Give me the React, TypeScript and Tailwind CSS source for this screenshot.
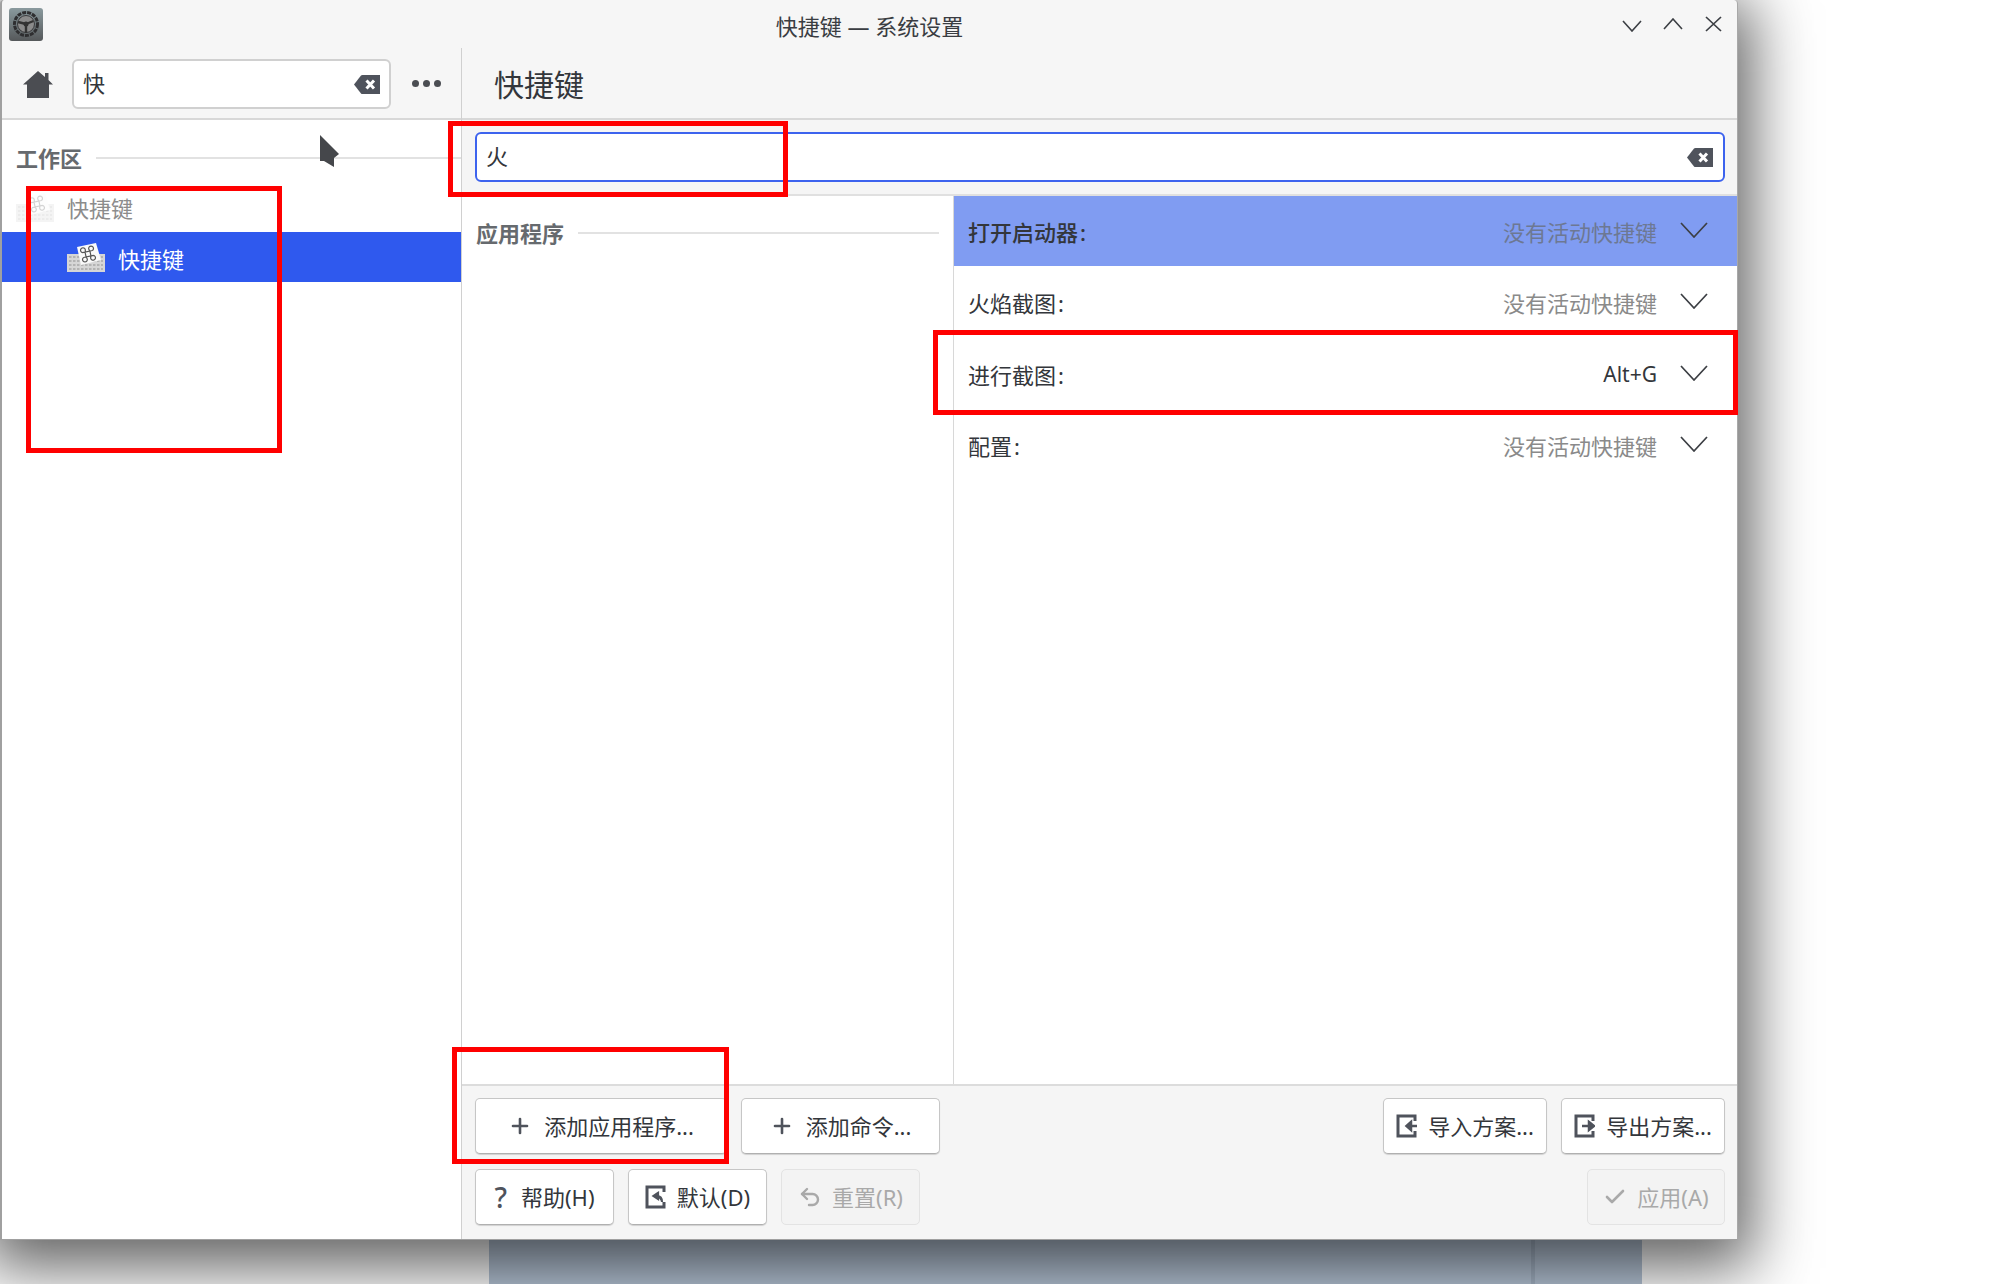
import { Check, Plus, Undo2 } from 'lucide-react'
import type { ReactNode } from 'react'

const fontClass = "font-['Noto_Sans','Noto_Sans_CJK_SC',sans-serif]"

function ClearIcon() {
  return (
    <svg width="28" height="21" viewBox="0 0 28 21">
      <path d="M8 1.5 Q8.5 1 9.5 1 H27 V20 H9.5 Q8.5 20 8 19.5 L1 10.5 Z" fill="#4f535c" />
      <path d="M13.5 6.5 L21 14.5 M21 6.5 L13.5 14.5" stroke="#fff" strokeWidth="3" />
    </svg>
  )
}

function HomeIcon() {
  return (
    <svg width="30" height="28" viewBox="0 0 30 28">
      <path d="M15 1 L22 7 V3 H25.5 V10 L30 14.5 H26 V28 H4 V14.5 H0 Z" fill="#4b4d52" />
    </svg>
  )
}

function GearTile() {
  return (
    <svg width="34" height="33" viewBox="0 0 34 33">
      <defs>
        <linearGradient id="tile" x1="0" y1="0" x2="0" y2="1">
          <stop offset="0" stopColor="#8a9a9e" />
          <stop offset="1" stopColor="#55585a" />
        </linearGradient>
      </defs>
      <rect width="34" height="33" rx="3" fill="url(#tile)" />
      <circle cx="17" cy="16" r="11.5" fill="none" stroke="#2e2e30" strokeWidth="3" strokeDasharray="4 1" />
      <circle cx="17" cy="16" r="8.5" fill="#8b8b8b" stroke="#3a3a3c" strokeWidth="1" />
      <circle cx="17" cy="16" r="2.5" fill="#333" />
      <path d="M17 16 L9 14 M17 16 L24.5 13 M17 16 L17 25" stroke="#333" strokeWidth="2.4" />
    </svg>
  )
}

function KeyboardIcon({ faded }: { faded?: boolean }) {
  return (
    <svg width="38" height="29" viewBox="0 0 38 29" className={faded ? 'opacity-25' : ''}>
      <rect x="0" y="11" width="38" height="18" fill="#d6d6d6" />
      <path
        d="M2 14h34M2 18h34M2 22h34M2 26h34"
        stroke="#a8a8a8"
        strokeWidth="1.4"
        strokeDasharray="2.5 1.5"
      />
      <path d="M10 4 L29 0 L34 17 L14 22 Z" fill="#fafafa" />
      <g transform="rotate(-12 21 11)">
        <path
          d="M18.5 8 V14 M23.5 8 V14 M16 8.5 H26 M16 13.5 H26 M18.5 8 a2.4 2.4 0 1 0 -2.5 0.5 M23.5 8 a2.4 2.4 0 1 1 2.5 0.5 M18.5 14 a2.4 2.4 0 1 1 -2.5 -0.5 M23.5 14 a2.4 2.4 0 1 0 2.5 -0.5"
          fill="none"
          stroke="#555"
          strokeWidth="1.2"
        />
      </g>
    </svg>
  )
}

function SchemeIcon({ kind }: { kind: 'import' | 'export' | 'default' }) {
  return (
    <svg width="21" height="24" viewBox="0 0 21 24">
      <path d="M19 7 V2 H2 V22 H19 V17" fill="none" stroke="#4f535c" strokeWidth="3" />
      {kind === 'import' && <path d="M21 12 H13 M15 8 L10.5 12 L15 16 Z" stroke="#4f535c" strokeWidth="2.5" fill="#4f535c" />}
      {kind === 'export' && <path d="M8 12 H15 M15 8 L20 12 L15 16 Z" stroke="#4f535c" strokeWidth="2.5" fill="#4f535c" />}
      {kind === 'default' && <path d="M17 17 Q17 11 12 11 M13 8 L8.5 11 L13 14 Z" stroke="#4f535c" strokeWidth="2.2" fill="#4f535c" />}
    </svg>
  )
}

function Chevron({ up, size = 20, width = 1.6 }: { up?: boolean; size?: number; width?: number }) {
  const h = size / 2
  return (
    <svg width={size} height={h + 2} viewBox={`0 0 ${size} ${h + 2}`}>
      <polyline
        points={up ? `1,${h + 1} ${h},1 ${size - 1},${h + 1}` : `1,1 ${h},${h + 1} ${size - 1},1`}
        fill="none"
        stroke="#3c3f44"
        strokeWidth={width}
      />
    </svg>
  )
}

function ActionButton({
  width,
  disabled,
  icon,
  gap,
  children,
}: {
  width: string
  disabled?: boolean
  icon: ReactNode
  gap: string
  children: ReactNode
}) {
  return (
    <div
      className={`flex h-[56px] items-center justify-center rounded-[5px] border text-[22px] ${width} ${gap} ${
        disabled
          ? 'border-[#e3e3e3] bg-[#f3f3f3] text-[#a9a9a9]'
          : 'border-[#c6c6c6] border-b-[#b0b0b0] bg-white text-[#33363b] shadow-[0_1px_1px_rgba(0,0,0,0.15)]'
      }`}
    >
      {icon}
      <span className="leading-none">{children}</span>
    </div>
  )
}

function SectionTitle({ label }: { label: string }) {
  return (
    <div className="flex items-center gap-[14px]">
      <span className="text-[22px] font-bold leading-none text-[#666a6e]">{label}</span>
      <div className="h-[2px] flex-1 bg-[#e2e2e2]" />
    </div>
  )
}

const shortcuts = [
  { name: '打开启动器', keys: '没有活动快捷键', active: true },
  { name: '火焰截图', keys: '没有活动快捷键' },
  { name: '进行截图', keys: 'Alt+G', bound: true },
  { name: '配置', keys: '没有活动快捷键' },
]

export default function App() {
  return (
    <div className={`relative h-[1284px] w-[2000px] overflow-hidden bg-white ${fontClass}`}>
      {/* Fenster */}
      <div className="relative z-10 flex h-[1240px] w-[1738px] flex-col rounded-t-[4px] border-r border-b border-l-2 border-r-[#a8a8a8] border-b-[#a0a0a0] border-l-[#a0a0a0] bg-[#f6f6f6] shadow-[0_14px_62px_14px_rgba(0,0,0,0.62)]">
        <div className="relative flex h-[48px] shrink-0 items-center">
          <div className="absolute left-[7px] top-[8px]">
            <GearTile />
          </div>
          <div className="w-full pt-[3px] text-center text-[22px] leading-none text-[#3a3d42]">快捷键 — 系统设置</div>
          <div className="absolute left-[1620px] top-[16px] flex items-center gap-[21px]">
            <div className="pt-[3px]">
              <Chevron />
            </div>
            <div>
              <Chevron up />
            </div>
            <svg width="17" height="16" viewBox="0 0 17 16" className="ml-[1px]">
              <path d="M1 1 L16 15 M16 1 L1 15" stroke="#3c3f44" strokeWidth="1.7" />
            </svg>
          </div>
        </div>

        <div className="flex min-h-0 flex-1">
          {/* Seitenleiste */}
          <div className="flex w-[460px] shrink-0 flex-col border-r border-r-[#d0d0d0] bg-white">
            <div className="flex h-[72px] shrink-0 items-start border-b-2 border-b-[#d8d8d8] bg-[#f6f6f6] pt-[11px]">
              <div className="ml-[21px] mt-[11px]">
                <HomeIcon />
              </div>
              <div className="ml-[19px] flex h-[50px] w-[319px] items-center rounded-[6px] border-2 border-[#d0d0d0] bg-white pl-[9px] pr-[8px]">
                <span className="flex-1 pb-[2px] text-[22px] leading-none text-[#33363b]">快</span>
                <ClearIcon />
              </div>
              <div className="ml-[21px] mt-[21px] flex gap-[4px]">
                <div className="h-[7px] w-[7px] rounded-full bg-[#4b4d52]" />
                <div className="h-[7px] w-[7px] rounded-full bg-[#4b4d52]" />
                <div className="h-[7px] w-[7px] rounded-full bg-[#4b4d52]" />
              </div>
            </div>
            <div className="mb-[10px] ml-[14px] mt-[23px] h-[30px] pt-[4px]">
              <SectionTitle label="工作区" />
            </div>
            <div className="-mt-[1px] flex h-[50px] items-center pl-[14px]">
              <KeyboardIcon faded />
              <span className="ml-[13px] pt-[1px] text-[22px] leading-none text-[#8c8c8c]">快捷键</span>
            </div>
            <div className="flex h-[50px] items-center bg-[#2f59ee] pl-[65px]">
              <KeyboardIcon />
              <span className="ml-[13px] pt-[3px] text-[22px] leading-none text-white">快捷键</span>
            </div>
          </div>

          {/* Inhalt */}
          <div className="flex min-w-0 flex-1 flex-col">
            <div className="flex h-[72px] shrink-0 items-center border-b-2 border-b-[#d8d8d8] pt-[3px] pl-[32px] text-[30px] leading-none text-[#33363b]">
              快捷键
            </div>
            <div className="flex h-[76px] shrink-0 items-start border-b-2 border-b-[#e0e0e0] bg-[#f5f5f5] pl-[13px] pr-[12px] pt-[12px]">
              <div className="flex h-[50px] w-full items-center rounded-[6px] border-2 border-[#3d63ee] bg-white pl-[9px] pr-[9px]">
                <span className="flex-1 pb-[2px] text-[22px] leading-none text-[#33363b]">火</span>
                <ClearIcon />
              </div>
            </div>

            <div className="flex min-h-0 flex-1 bg-white">
              <div className="w-[492px] shrink-0 border-r border-r-[#d8d8d8] pl-[14px] pr-[14px] pt-[26px]">
                <SectionTitle label="应用程序" />
              </div>
              <div className="flex flex-1 flex-col gap-[1.5px]">
                {shortcuts.map((s) => (
                  <div
                    key={s.name}
                    className={`flex h-[70px] items-center pl-[14px] pr-[29px] pt-[1px] ${s.active ? 'bg-[#809cf2]' : ''}`}
                  >
                    <span className={`flex-1 text-[22px] leading-none text-[#33363b] ${s.active ? 'font-medium' : ''}`}>
                      {s.name}
                      <span className="ml-[2px]">:</span>
                    </span>
                    <span
                      className={`leading-none ${s.bound ? 'text-[21px] text-[#33363b]' : 'text-[22px]'} ${
                        s.active ? 'text-[#6d7893]' : s.bound ? '' : 'text-[#8a8a8a]'
                      }`}
                    >
                      {s.keys}
                    </span>
                    <div className="ml-[23px] -translate-y-[2px]">
                      <Chevron size={28} width={1.7} />
                    </div>
                  </div>
                ))}
              </div>
            </div>

            {/* Fußleiste */}
            <div className="flex h-[155px] shrink-0 flex-col gap-[15px] border-t-2 border-t-[#dcdcdc] bg-[#f5f5f5] pl-[13px] pr-[12px] pt-[12px]">
              <div className="flex gap-[14px]">
                <ActionButton
                  width="w-[252px]"
                  gap="gap-[12px]"
                  icon={<Plus size={24} strokeWidth={2.6} className="text-[#4f535c]" />}
                >
                  添加应用程序...
                </ActionButton>
                <ActionButton
                  width="w-[199px]"
                  gap="gap-[12px]"
                  icon={<Plus size={24} strokeWidth={2.6} className="text-[#4f535c]" />}
                >
                  添加命令...
                </ActionButton>
                <div className="flex-1" />
                <ActionButton width="w-[164px]" gap="gap-[11px]" icon={<SchemeIcon kind="import" />}>
                  导入方案...
                </ActionButton>
                <ActionButton width="w-[164px]" gap="gap-[11px]" icon={<SchemeIcon kind="export" />}>
                  导出方案...
                </ActionButton>
              </div>
              <div className="flex gap-[14px]">
                <ActionButton
                  width="w-[139px]"
                  gap="gap-[14px]"
                  icon={<span className="text-[28px] font-medium leading-none text-[#4f535c]">?</span>}
                >
                  帮助(H)
                </ActionButton>
                <ActionButton width="w-[139px]" gap="gap-[11px]" icon={<SchemeIcon kind="default" />}>
                  默认(D)
                </ActionButton>
                <ActionButton
                  width="w-[139px]"
                  gap="gap-[10px]"
                  disabled
                  icon={<Undo2 size={24} strokeWidth={2.4} className="text-[#a9a9a9]" />}
                >
                  重置(R)
                </ActionButton>
                <div className="flex-1" />
                <ActionButton
                  width="w-[138px]"
                  gap="gap-[10px]"
                  disabled
                  icon={<Check size={24} strokeWidth={2.6} className="text-[#a9a9a9]" />}
                >
                  应用(A)
                </ActionButton>
              </div>
            </div>
          </div>
        </div>
      </div>

      {/* Hintergrund unter dem Fenster */}
      <div className="ml-[489px] flex h-[44px] w-[1153px] justify-end bg-[#b7c6d8] pr-[107px]">
        <div className="h-full w-[4px] bg-[#a6b5c7]" />
      </div>

      {/* Mauszeiger */}
      <svg width="24" height="36" viewBox="0 0 24 36" className="absolute left-[319px] top-[134px] z-20">
        <path d="M1 1 L20 20 L15 24 L15 33 L5 27 L1 27 Z" fill="#45474b" />
      </svg>

      {/* Rote Markierungen */}
      <div className="absolute left-[26px] top-[186px] z-20 h-[267px] w-[256px] border-[5px] border-[#ff0000]" />
      <div className="absolute left-[448px] top-[121px] z-20 h-[76px] w-[340px] border-[5px] border-[#ff0000]" />
      <div className="absolute left-[933px] top-[330px] z-20 h-[85px] w-[805px] border-[5px] border-[#ff0000]" />
      <div className="absolute left-[452px] top-[1047px] z-20 h-[117px] w-[277px] border-[5px] border-[#ff0000]" />
    </div>
  )
}
